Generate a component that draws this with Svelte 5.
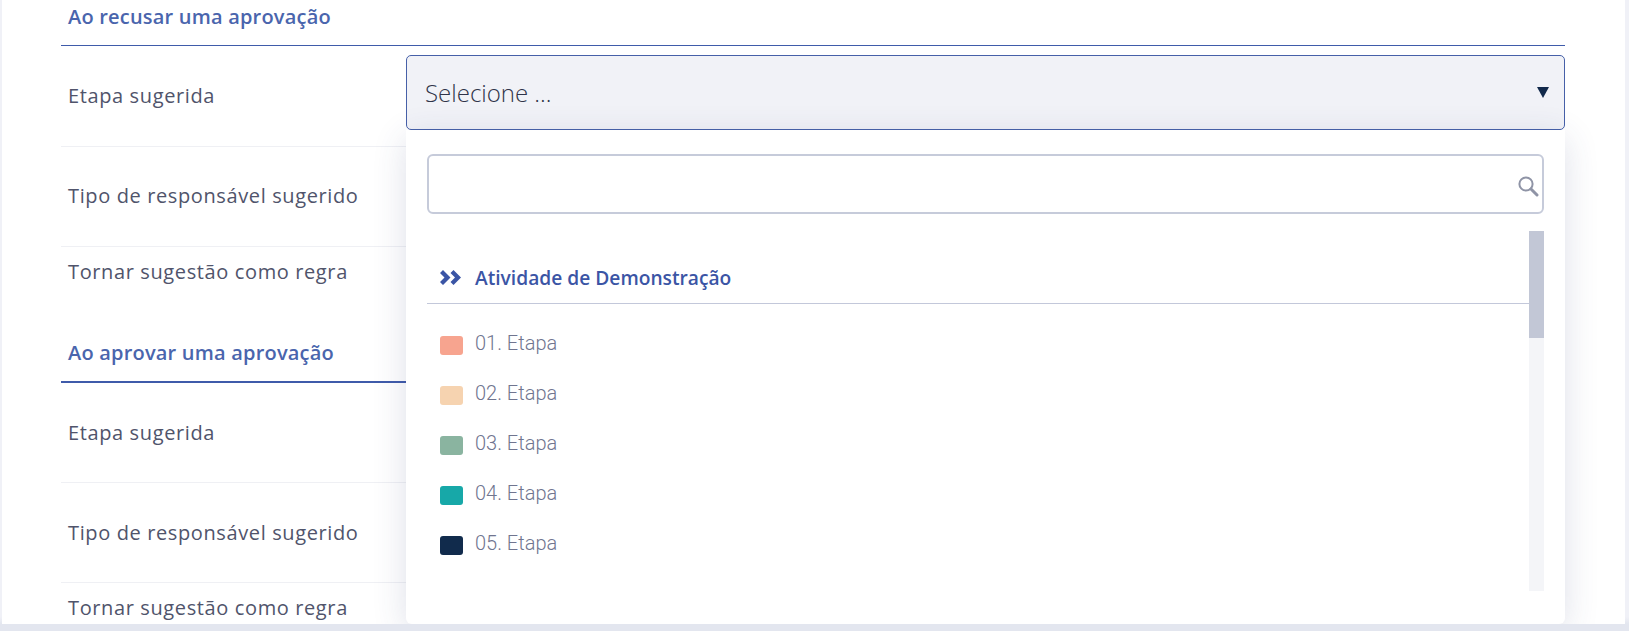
<script>
  const sections = [
    { title: 'Ao recusar uma aprovação', open: true },
    { title: 'Ao aprovar uma aprovação', open: false }
  ];
  const steps = [
    { name: '01. Etapa', color: '#f7a48f' },
    { name: '02. Etapa', color: '#f6d3b0' },
    { name: '03. Etapa', color: '#8ab4a0' },
    { name: '04. Etapa', color: '#17a8a8' },
    { name: '05. Etapa', color: '#112b4c' }
  ];
</script>

<div class="page">
  <main class="panel">
    {#each sections as section}
      <section class="section">
        <h2 class="title">{section.title}</h2>
        <div class="row">
          <span class="label">Etapa sugerida</span>
          <div class="field" class:active={section.open}>
            <div class="select" class:open={section.open}>
              {#if section.open}
                <span class="value">Selecione ...</span>
                <svg class="caret" viewBox="0 0 12 12" width="12" height="12"><path d="M0 1h12L6 12z" fill="#12294b" /></svg>
              {/if}
            </div>
            {#if section.open}
              <div class="dropdown">
                <div class="search">
                  <svg class="lens" viewBox="0 0 22 22" width="22" height="22" fill="none" stroke="#8f94a6">
                    <circle cx="9" cy="9" r="6.6" stroke-width="2" />
                    <path d="M14 14l6 6" stroke-width="3" stroke-linecap="round" />
                  </svg>
                </div>
                <div class="list">
                  <div class="options">
                    <div class="group">
                      <svg viewBox="0 0 21 15" width="21" height="15" fill="#3b55a5"><path d="M0 3 3 0l7.5 7.5L3 15l-3-3 4.5-4.5zM10.500 3l3-3L21 7.500 13.500 15l-3-3L15 7.500z" /></svg>
                      <span>Atividade de Demonstração</span>
                    </div>
                    {#each steps as step}
                      <div class="option">
                        <i class="swatch" style="background:{step.color}"></i>
                        <span>{step.name}</span>
                      </div>
                    {/each}
                  </div>
                  <div class="track"><div class="thumb"></div></div>
                </div>
              </div>
            {/if}
          </div>
        </div>
        <div class="row">
          <span class="label">Tipo de responsável sugerido</span>
          <div class="field"><div class="select"></div></div>
        </div>
        <div class="row short">
          <span class="label">Tornar sugestão como regra</span>
        </div>
      </section>
    {/each}
  </main>
</div>

<style>
  :global(body) {
    margin: 0;
    background: #e3e6ef;
    overflow: hidden;
  }
  .page {
    height: 631px;
    overflow: hidden;
    box-sizing: border-box;
    padding: 0 4px 7px 2px;
    background: linear-gradient(#f0f1f7, #f0f1f7 617px, #e3e6ef 624px);
  }
  .panel {
    height: 624px;
    overflow: hidden;
    background: #fff;
    padding: 0 60px 0 59px;
    box-sizing: border-box;
    font-family: "Open Sans", Lato, sans-serif;
    color: #50546b;
  }
  .title {
    margin: 0;
    height: 32px;
    padding: 0 7px 13px;
    font-size: 20px;
    font-weight: 600;
    line-height: 34px;
    color: #4a65ad;
    border-bottom: 1px solid #3f5baa;
    letter-spacing: 0.2px;
  }
  .section + .section .title {
    border-bottom-width: 2px;
    padding-top: 15px;
  }
  .row {
    display: flex;
    height: 100.5px;
    box-sizing: border-box;
    align-items: center;
    padding-left: 7px;
    border-bottom: 1px solid #eff0f4;
  }
  .section + .section .row {
    height: 100px;
  }
  .section + .section .row.short,
  .row.short {
    height: 74px;
    border-bottom: 0;
    align-items: flex-start;
    padding-top: 12px;
  }
  .label {
    flex: 0 0 338px;
    font-size: 20px;
    line-height: 26px;
    letter-spacing: 0.62px;
  }
  .field {
    flex: 1;
    position: relative;
    align-self: flex-start;
    padding-top: 9px;
  }
  .select {
    height: 73px;
    box-sizing: content-box;
    border: 1px solid #dcdfe9;
    border-radius: 5px;
    background: #f1f2f7;
    display: flex;
    align-items: center;
    justify-content: space-between;
    padding: 0 15px 0 18px;
  }
  .select.open {
    border-color: #4660a8;
  }
  .value {
    font-family: "Open Sans", sans-serif;
    font-weight: 300;
    font-size: 24px;
    color: #2f3449;
  }
  .caret {
    margin-top: -2px;
  }
  .dropdown {
    position: absolute;
    z-index: 2;
    top: 84px;
    left: 0;
    right: 0;
    height: 494px;
    box-sizing: border-box;
    padding: 24px 21px 0;
    background: #fff;
    border-radius: 0 0 6px 6px;
    box-shadow: 0 8px 34px rgba(52, 62, 120, 0.16);
    font-family: "Open Sans", sans-serif;
  }
  .search {
    position: relative;
    height: 60px;
    box-sizing: border-box;
    border: 2px solid #c6cbda;
    border-radius: 6px;
  }
  .lens {
    position: absolute;
    right: 3px;
    top: 19px;
  }
  .list {
    display: flex;
    margin-top: 17px;
    height: 360px;
  }
  .options {
    flex: 1;
  }
  .track {
    flex: 0 0 15px;
    background: #f4f5f8;
  }
  .thumb {
    height: 107px;
    background: #c2c7d6;
  }
  .group {
    height: 73px;
    box-sizing: border-box;
    border-bottom: 1px solid #c3c8da;
    display: flex;
    align-items: center;
    gap: 14px;
    padding: 20px 0 0 13px;
    font-size: 19.2px;
    font-weight: 600;
    color: #3b55a5;
  }
  .option {
    height: 50px;
    display: flex;
    align-items: center;
    gap: 12px;
    padding-left: 13px;
    font-family: Roboto, "Open Sans", sans-serif;
    font-size: 20px;
    font-weight: 300;
    color: #70758f;
  }
  .group + .option {
    margin-top: 14px;
  }
  .swatch {
    flex: 0 0 23px;
    height: 19px;
    margin-top: 4px;
    border-radius: 3px;
  }
</style>
